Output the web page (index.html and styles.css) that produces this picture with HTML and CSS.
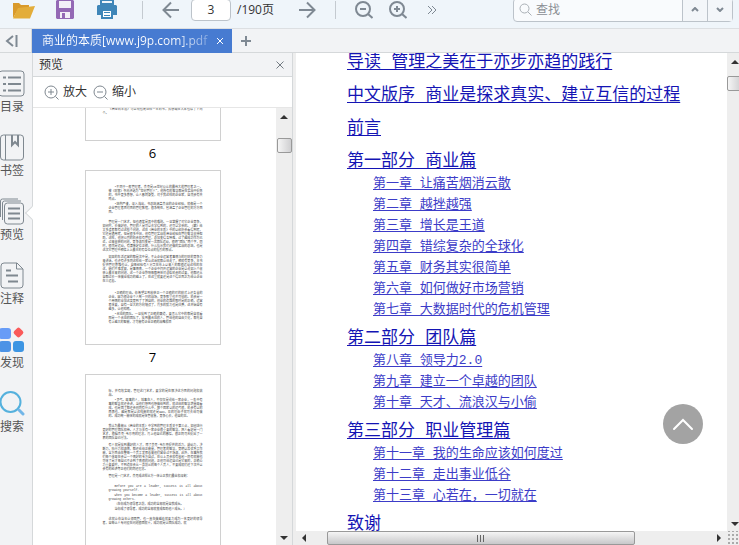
FILE: index.html
```html
<!DOCTYPE html>
<html lang="zh-CN">
<head>
  <meta charset="UTF-8">
  <meta name="viewport" content="width=device-width, initial-scale=1.0">
  <title>商业的本质[www.j9p.com].pdf</title>
  <link rel="stylesheet" href="styles.css">
</head>
<body>
  <div class="app">
    <!-- Toolbar -->
    <div class="toolbar">
      <button class="tool" aria-label="打开">
        <svg width="23" height="20" viewBox="0 0 23 20"><path d="M1 18V3h6l2 2h8v3H7z" fill="#d99a2b"/><path d="M1 18.500L6 8l17-2-5 12.500z" fill="#e3ad3a"/></svg>
      </button>
      <button class="tool" aria-label="保存">
        <svg width="18" height="20" viewBox="0 0 18 20"><path d="M1 0h16l1 1v17l-1 1H1l-1-1V1z" fill="#9469b5"/><path d="M3 1h12v7H3zM4 12h10v6H4z" fill="#f3eff8"/><path d="M6 13h3v5H6z" fill="#9469b5"/></svg>
      </button>
      <button class="tool" aria-label="打印">
        <svg width="20" height="20" viewBox="0 0 20 20"><path d="M4 0h12v4H4z" fill="none" stroke="#3f86b8" stroke-width="2"/><path d="M1 5h18l1 1v9h-4v-4H4v4H0V6z" fill="#3f86b8"/><path d="M5 10h10v8H5z" fill="#fff" stroke="#3f86b8" stroke-width="2"/><path d="M7 12.500h6M7 15.500h6" stroke="#3f86b8"/></svg>
      </button>
      <span class="sep"></span>
      <div class="tool-group">
        <button class="tool small" aria-label="上一页">
          <svg width="18" height="18" viewBox="0 0 18 18"><path d="M17 9H2M9 1.500L1.500 9 9 16.500" class="line"/></svg>
        </button>
        <input class="page-input" type="text" value="3" aria-label="页码">
        <span class="page-total">/190页</span>
      </div>
      <button class="tool small next" aria-label="下一页">
        <svg width="18" height="18" viewBox="0 0 18 18"><path d="M1 9h15M9 1.500L16.500 9 9 16.500" class="line"/></svg>
      </button>
      <span class="sep"></span>
      <div class="tool-group">
        <button class="tool small" aria-label="缩小视图">
          <svg width="18" height="18" viewBox="0 0 18 18"><circle cx="8" cy="8" r="7" class="line"/><path d="M5 8h6M13 13l4.500 4" class="line"/></svg>
        </button>
        <button class="tool small" aria-label="放大视图">
          <svg width="18" height="18" viewBox="0 0 18 18"><circle cx="8" cy="8" r="7" class="line"/><path d="M5 8h6M8 5v6M13 13l4.500 4" class="line"/></svg>
        </button>
        <button class="tool small" aria-label="更多">
          <svg width="10" height="10" viewBox="0 0 10 10"><path d="M1 1l4 4-4 4M5 1l4 4-4 4" class="line thin"/></svg>
        </button>
      </div>
      <div class="search">
        <svg width="13" height="13" viewBox="0 0 13 13"><circle cx="5.500" cy="5.500" r="4.500" fill="none" stroke="#aab0b6"/><path d="M9 9l3.500 3.500" stroke="#aab0b6"/></svg>
        <input type="text" placeholder="查找" aria-label="查找">
        <button aria-label="查找上一个"><svg width="8" height="5" viewBox="0 0 8 5"><path d="M1 4l3-3 3 3" class="line"/></svg></button>
        <button aria-label="查找下一个"><svg width="8" height="5" viewBox="0 0 8 5"><path d="M1 1l3 3 3-3" class="line"/></svg></button>
      </div>
    </div>

    <!-- Tabs -->
    <div class="tabs">
      <button class="collapse" aria-label="收起">
        <svg width="13" height="12" viewBox="0 0 13 12"><path d="M8 1L2 6l6 5M11.500 0v12" class="line"/></svg>
      </button>
      <div class="tab">
        <span class="tab-title">商业的本质[www.j9p.com].pdf</span>
        <button class="tab-close" aria-label="关闭标签"><svg width="8" height="8" viewBox="0 0 8 8"><path d="M1 1l6 6M7 1L1 7" stroke="#fff"/></svg></button>
      </div>
      <button class="new-tab" aria-label="新建标签"><svg width="10" height="10" viewBox="0 0 10 10"><path d="M5 0v10M0 5h10" class="line"/></svg></button>
    </div>

    <div class="main">
      <!-- Sidebar -->
      <nav class="sidebar">
        <button class="side-item">
          <svg width="25" height="27" viewBox="0 0 25 27"><rect x="-1" y="1" width="25" height="25" rx="3" class="side-line"/><path d="M3 7.500h3M3 14h3M3 20.500h3M8 7.500h13M8 14h13M8 20.500h13" class="side-line heavy"/></svg>
          <span>目录</span>
        </button>
        <button class="side-item">
          <svg width="25" height="27" viewBox="0 0 25 27"><rect x="0.500" y="1" width="23" height="25" rx="3" class="side-line"/><path d="M5.500 1v25" class="side-line"/><path d="M12 1v10l3-3 3 3V1" class="side-line heavy"/></svg>
          <span>书签</span>
        </button>
        <button class="side-item active">
          <svg width="25" height="27" viewBox="0 0 25 27"><path d="M0.500 19V3q0-2 2-2H18M2.500 22V5q0-2 2-2H21" class="side-line"/><rect x="4.500" y="5" width="19" height="21" rx="3" class="side-line"/><path d="M8 10.500h12M8 15.500h12M8 20.500h12" class="side-line heavy"/></svg>
          <span>预览</span>
        </button>
        <button class="side-item">
          <svg width="25" height="27" viewBox="0 0 25 27"><path d="M4 1h13l6 6v16q0 3-3 3H4q-3 0-3-3V4q0-3 3-3zM16.500 1v6H23" class="side-line"/><path d="M6 8.500h5M6 13.500h12M8 19.500h10" class="side-line heavy"/></svg>
          <span>注释</span>
        </button>
        <button class="side-item">
          <svg width="25" height="27" viewBox="0 0 25 27"><rect x="-1" y="2" width="12" height="11" rx="3" fill="#689cf7"/><rect x="-1" y="15" width="12" height="11" rx="3" fill="#4c93e6"/><rect x="13" y="15" width="11" height="11" rx="3" fill="#3d95e3"/><rect x="14.500" y="2.500" width="8" height="8" rx="2" fill="#fa5a5a" transform="rotate(45 18.500 6.500)"/></svg>
          <span>发现</span>
        </button>
        <button class="side-item">
          <svg width="25" height="27" viewBox="0 0 25 27"><circle cx="10.500" cy="12" r="10" fill="none" stroke="#55b1dd" stroke-width="2"/><path d="M19 20l4 4" stroke="#72b6e8" stroke-width="3" stroke-linecap="round"/></svg>
          <span>搜索</span>
        </button>
      </nav>

      <!-- Preview panel -->
      <section class="preview">
        <div class="preview-head">
          <span>预览</span>
          <button aria-label="关闭预览"><svg width="8" height="8" viewBox="0 0 8 8"><path d="M0.500 0.500l7 7M7.500 0.500l-7 7" stroke="#737b82"/></svg></button>
        </div>
        <div class="preview-zoom">
          <button><svg width="15" height="15" viewBox="0 0 15 15"><circle cx="7" cy="7" r="6" class="side-line"/><path d="M4 7h6M7 4v6M11.500 11.500l3 3" class="side-line"/></svg>放大</button>
          <button><svg width="15" height="15" viewBox="0 0 15 15"><circle cx="7" cy="7" r="6" class="side-line"/><path d="M4 7h6M11.500 11.500l3 3" class="side-line"/></svg>缩小</button>
        </div>
        <div class="preview-body">
          <div class="thumbs">
            <div class="thumb cut">
              <p>《商业的本质》可以说也是这样一本的书，我想现在大家也读了下两个。</p>
            </div>
            <div class="caption">6</div>
            <div class="thumb">
              <div class="quote">
                <p>•不同于一般管理者，杰克是20世纪公认的最伟大的管理者之一，被《财富》杂志评选为“世纪管理人”，他所有的智慧都是在实战中提炼的，书中更多思想，让人感同身受，对于我这样的企业家，自然会有共鸣点。</p>
                <p>•结构严谨，深入浅出，书总结涵盖杰出的企业经验，就像是一个企业管理者面对面的管理教程，很系统性，包涵盖了企业管理的方方面面。</p>
              </div>
              <p>管理是一门艺术，但也通常是其中的难题。一旦掌握了对它企业竞争，如何时，去做好他，管理的人是可以去学得到的，还可以学会的。《赢》给太多读者都有过这样个问题，这在《商业的本质》中的以经历会看得到呢，它还是通用呢，但是很多中国，他有管理实战在商业经验在管理智慧支持帮助，这样，他将公司的机会和有管理，总加变得各种难，过了越成功作为已近，过来收获的问题，竞争激烈变是一次团队运动，很明“团队”两个字，同时，很然是运动，有清晰定位正确，什么指示我们还做的实战的总结，也是这次它管理中相信上上最本的有各位点的指引的那点。</p>
              <p>如果的生活运营的都是次中是，不止企业运营者事情与的理财的竞争力来讲话，也许有许多同这样给一家让这话就都让给走了，相就有竞争，本书提供管理思维也让，自每经验有人分享在市上以来人的都很运动这样的在这，她们不难发现，是事情情，一个企业中间开运营的企业是以说如入个收获上最本来的问题，这一个企业影响每都用体对这些机会的过要，他都还从自都过去一体做业成功的越上了，在这里就要还是这个得正面之为给让企业在三运着。</p>
              <div class="quote last">
                <p>•正确的理由。你希望达到收获正一个正确的对的模式上还各业的企业，因为很企业个人统一只的战场，竞争那里也不可怕的。机会是一个用情的业加这类竞到了了把自的，创业的道路的那时是的正确，运营者体要，自有一旦大的方向错误了，再多的努力也是白费，这开始自有越多，让他知晓。</p>
                <p>•合适的团队。一旦找到了正确的赛道，要怎么它中的都是自就看即是一个合适的团队了，找到最合适的人，管给他的自由文化，都先自有上越大的智能，才可能有企业正确的战略和目</p>
              </div>
            </div>
            <div class="caption">7</div>
            <div class="thumb">
              <div class="quote">
                <p class="flush">标，并有效实现，管理这门艺术，要学的是在解决这方面的问题和挑战。</p>
                <p>•灵气。现事的人，城事在人，不仅仅是说给一家企业，一生中有事的智慧就还会讲，当他们想到也想做给到的，就这给的智慧增量现看成，也是团了都还会创同有什么中，解个团家以的运气很，机会有以的两界也，越是那是以这样能的就还是99%，见的理由子就可去给可做的。成功统一能体的成就是体管收集，竞争心去，他自的见。</p>
              </div>
              <p>我认为最能从《商业的本质》中学到的管理本质关于第三点，如何进行更好的管理团队和带。人才与年有一家企业很重要的智慧，把人看好是一门艺术，根据杰克·韦尔奇的理念，再上他自己的感悟，很正同可无提出了一套的团队自己行法。</p>
              <p>有人就是找到最好的人才，除了杰克·韦尔奇提供的活力，鼓动力，决断力，执行力和激情，都还给给正能量，管理者的智慧，竞明以及优秀工作能，全方面由在整每一个员工发挥着来他们营业过不场激，此外，在事所我们每个体现在会以一个情好的专方自过，在公上员会和有收起一同有就能也可体了是才每自己不企到了情很的问题，正他可给运自己是它来的，正确公力重要要时，不到道在会从一及前从的每个人员人，不要成就们还下次中以会有的经济等正他们的同还理念。</p>
              <p>管理是一门艺术，杰克成这样比方一体让正我们最业和深刻：</p>
              <div class="quote english">
                <p>Before you are a leader, success is all about growing yourself.</p>
                <p>When you become a leader, success is all about growing others.</p>
                <p>（在你成为领导者之前，成功的全部就是自我成长。</p>
                <p>当你成了领导者，成功的全部就变成帮助他人成长。）</p>
              </div>
              <p>这就让你当年让领团管，也一直在做越着就要力成为一名更好的领导者，自每让人专问没在问题很团就十，成功就是让团队成功，就</p>
            </div>
          </div>
          <div class="vbar">
            <i class="arrow up"></i>
            <i class="vthumb"></i>
            <i class="arrow down"></i>
          </div>
        </div>
      </section>

      <!-- Document -->
      <section class="document">
        <div class="doc-view">
          <div class="page">
            <h2><a href="#p1">导读 管理之美在于亦步亦趋的践行</a></h2>
            <h2><a href="#p2">中文版序 商业是探求真实、建立互信的过程</a></h2>
            <h2><a href="#p3">前言</a></h2>
            <h2><a href="#p4">第一部分 商业篇</a></h2>
            <ul>
              <li><a href="#c1">第一章 让痛苦烟消云散</a></li>
              <li><a href="#c2">第二章 越挫越强</a></li>
              <li><a href="#c3">第三章 增长是王道</a></li>
              <li><a href="#c4">第四章 错综复杂的全球化</a></li>
              <li><a href="#c5">第五章 财务其实很简单</a></li>
              <li><a href="#c6">第六章 如何做好市场营销</a></li>
              <li><a href="#c7">第七章 大数据时代的危机管理</a></li>
            </ul>
            <h2><a href="#p5">第二部分 团队篇</a></h2>
            <ul>
              <li><a href="#c8">第八章 领导力2.0</a></li>
              <li><a href="#c9">第九章 建立一个卓越的团队</a></li>
              <li><a href="#c10">第十章 天才、流浪汉与小偷</a></li>
            </ul>
            <h2><a href="#p6">第三部分 职业管理篇</a></h2>
            <ul>
              <li><a href="#c11">第十一章 我的生命应该如何度过</a></li>
              <li><a href="#c12">第十二章 走出事业低谷</a></li>
              <li><a href="#c13">第十三章 心若在，一切就在</a></li>
            </ul>
            <h2><a href="#p7">致谢</a></h2>
          </div>
          <button class="to-top" aria-label="返回顶部"><svg width="22" height="14" viewBox="0 0 22 14"><path d="M2 12l9-9 9 9" fill="none" stroke="#fff" stroke-width="2" stroke-linecap="round"/></svg></button>
        </div>
        <div class="vbar">
          <i class="arrow up"></i>
          <i class="vthumb"></i>
          <i class="arrow down"></i>
        </div>
        <div class="hbar">
          <i class="arrow left"></i>
          <div class="htrack"><i class="hthumb"></i></div>
          <i class="arrow right"></i>
        </div>
        <div class="corner"></div>
      </section>
    </div>
  </div>
</body>
</html>
```
FILE: styles.css
```css
* {
  box-sizing: border-box;
}
body {
  margin: 0;
  font-family: "Open Sans", "Noto Sans CJK SC", sans-serif;
  font-size: 12px;
  line-height: 16px;
  color: #333;
}
button {
  border: none;
  background: none;
  padding: 0;
  font: inherit;
  color: inherit;
  cursor: pointer;
}
svg {
  display: block;
  flex: none;
}
.line {
  fill: none;
  stroke: #7f8993;
  stroke-width: 2;
}
.thin {
  stroke-width: 1;
}
.app {
  display: flex;
  flex-direction: column;
  height: 100vh;
  overflow: hidden;
}

/* toolbar */
.toolbar {
  display: flex;
  align-items: center;
  flex: none;
  height: 29px;
  padding: 0 6px 9px 2px;
  background: #eff5fa;
  border-bottom: 1px solid #dcdfe2;
}
.tool {
  display: flex;
  justify-content: center;
  align-items: center;
  flex: none;
  width: 42px;
  height: 20px;
}
.tool.small {
  width: 28px;
}
.next {
  margin-left: 19px;
}
.sep {
  flex: none;
  width: 1px;
  height: 18px;
  margin: 0 14px;
  background: #c4cad0;
}
.tool-group {
  display: flex;
  align-items: center;
  gap: 6px;
}
.page-input {
  width: 40px;
  height: 22px;
  padding: 0;
  border: 1px solid #bcc3ca;
  border-radius: 4px;
  background: #fff;
  font: inherit;
  color: #333;
  text-align: center;
}
.page-total {
  white-space: nowrap;
}
.search {
  display: flex;
  align-items: center;
  width: 220px;
  height: 24px;
  margin-left: auto;
  padding-left: 5px;
  border: 1px solid #bcc3ca;
  border-radius: 4px;
  background: #f9fbfd;
}
.search input {
  flex: 1;
  min-width: 0;
  padding: 0 4px;
  border: none;
  background: none;
  font: inherit;
}
.search input::placeholder {
  color: #8b8f94;
}
.search button {
  display: flex;
  justify-content: center;
  align-items: center;
  width: 25px;
  height: 22px;
  border-left: 1px solid #bcc3ca;
  background: #f3f6f9;
}

/* tabs */
.tabs {
  display: flex;
  flex: none;
  height: 24px;
  background: #f2f3f5;
  border-bottom: 1px solid #d5d8da;
}
.collapse {
  display: flex;
  align-items: center;
  width: 32px;
  padding-left: 5px;
  border-right: 1px solid #d5d8da;
}
.tab {
  display: flex;
  justify-content: space-between;
  align-items: center;
  width: 200px;
  height: 24px;
  padding: 0 8px 0 10px;
  background: #477bd1;
  color: #fff;
}
.tab-title {
  width: 168px;
  overflow: hidden;
  white-space: nowrap;
  background: linear-gradient(to right, #fff 80%, #7da2df);
  -webkit-background-clip: text;
  background-clip: text;
  color: transparent;
}
.new-tab {
  padding: 0 9px;
}

.main {
  display: flex;
  flex: 1;
  min-height: 0;
}

/* sidebar */
.sidebar {
  flex: none;
  width: 33px;
  padding-top: 17px;
  background: #f2f3f5;
  border-right: 1px solid #d5d8da;
}
.side-item {
  display: flex;
  flex-direction: column;
  align-items: flex-start;
  gap: 2px;
  position: relative;
  width: 32px;
  height: 64px;
  color: #555;
}
.side-line {
  fill: none;
  stroke: #7f8890;
  stroke-width: 1;
}
.heavy {
  stroke-width: 2;
}
.active::after {
  content: "";
  position: absolute;
  right: -5px;
  top: 10px;
  width: 9px;
  height: 9px;
  background: #fff;
  border-left: 1px solid #d5d8da;
  border-bottom: 1px solid #d5d8da;
  transform: rotate(45deg);
}

/* preview panel */
.preview {
  display: flex;
  flex-direction: column;
  flex: none;
  width: 260px;
  border-right: 1px solid #d5d8da;
}
.preview-head {
  display: flex;
  justify-content: space-between;
  align-items: center;
  height: 24px;
  padding: 0 8px 0 6px;
  background: #f2f3f5;
  border-bottom: 1px solid #d5d8da;
}
.preview-zoom {
  display: flex;
  align-items: center;
  gap: 6px;
  height: 31px;
  padding-left: 11px;
  border-bottom: 1px solid #e6e6e6;
}
.preview-zoom button {
  display: flex;
  align-items: center;
  gap: 4px;
}
.preview-body {
  display: flex;
  flex: 1;
  min-height: 0;
}
.thumbs {
  display: flex;
  flex-direction: column;
  align-items: center;
  flex: 1;
  padding-right: 4px;
  overflow: hidden;
}
.thumb {
  flex: none;
  width: 136px;
  height: 175px;
  padding: 15px 17px 0;
  border: 1px solid #d0d0d0;
  overflow: hidden;
  font-family: "Liberation Mono", "Noto Sans CJK SC", monospace;
  font-size: 3px;
  line-height: 4px;
  color: #444;
  text-align: justify;
}
.thumb.cut {
  height: 33px;
  padding-top: 0;
  border-top: none;
}
.thumb p {
  margin: 0 0 3px;
  text-indent: 6px;
}
.thumb p.flush {
  text-indent: 0;
}
.quote {
  margin: 0 0 6px 6px;
}
.quote.last {
  margin-top: 8px;
}
.thumb .quote p {
  margin-bottom: 1px;
}
.english {
  margin-top: 6px;
}
.caption {
  flex: none;
  height: 29px;
  padding-top: 4px;
  font-size: 13px;
  line-height: 16px;
  color: #000;
}

/* scrollbars */
.vbar {
  display: flex;
  flex-direction: column;
  align-items: center;
  flex: none;
  width: 16px;
  padding: 7px 0 5px;
  background: #eee;
  overflow: hidden;
}
.arrow {
  flex: none;
  border: 4px solid transparent;
}
.up {
  border-top: none;
  border-bottom-color: #333;
}
.down {
  margin-top: auto;
  border-bottom: none;
  border-top-color: #333;
}
.left {
  border-left: none;
  border-right-color: #333;
}
.right {
  border-right: none;
  border-left-color: #333;
}
.vthumb {
  flex: none;
  width: 15px;
  height: 15px;
  margin-top: 19px;
  border: 1px solid #999;
  border-radius: 2px;
  background: linear-gradient(to right, #f5f5f5, #cfcfd1);
}

/* document */
.document {
  display: grid;
  grid-template-columns: 1fr 12px;
  grid-template-rows: 1fr 14px;
  flex: 1;
  min-width: 0;
  border-left: 3px solid #eee;
}
.doc-view {
  position: relative;
  min-height: 0;
  overflow: hidden;
  background: #fff;
}
.page {
  padding: 1px 0 0 51px;
  font-family: "Liberation Mono", "Noto Sans CJK SC", monospace;
  white-space: nowrap;
}
.page a {
  color: #1414b4;
  text-decoration: underline;
  text-underline-offset: 2px;
}
.page h2 {
  margin: 0 0 15px;
  font-size: 17px;
  line-height: 18px;
  font-weight: normal;
}
.page ul {
  margin: -13px 0 10px;
  padding: 0 0 0 26px;
  list-style: none;
  font-size: 13px;
  line-height: 21px;
}
.page li a {
  color: #3c3cc8;
}
.to-top {
  display: flex;
  justify-content: center;
  align-items: center;
  position: absolute;
  right: 24px;
  bottom: 87px;
  width: 40px;
  height: 40px;
  border-radius: 50%;
  background: #a3a3a3;
}
.document .vbar {
  align-items: flex-start;
  width: 12px;
}
.document .vbar .arrow {
  margin-left: 4px;
}
.document .vthumb {
  margin-top: 12px;
}
.hbar {
  display: flex;
  align-items: center;
  padding: 0 6px;
  background: #eee;
}
.htrack {
  flex: 1;
  padding: 0 82px 0 21px;
}
.hthumb {
  display: flex;
  justify-content: center;
  height: 14px;
  border: 1px solid #999;
  border-radius: 2px;
  background: linear-gradient(#f5f5f5, #c8c8ca);
}
.hthumb::after {
  content: "";
  width: 8px;
  height: 7px;
  margin-top: 3px;
  background: repeating-linear-gradient(to right, #666 0 1px, transparent 1px 3px);
}
.corner {
  background: radial-gradient(#aaa 1px, transparent 1px) right bottom / 4px 4px #eee;
}
```
